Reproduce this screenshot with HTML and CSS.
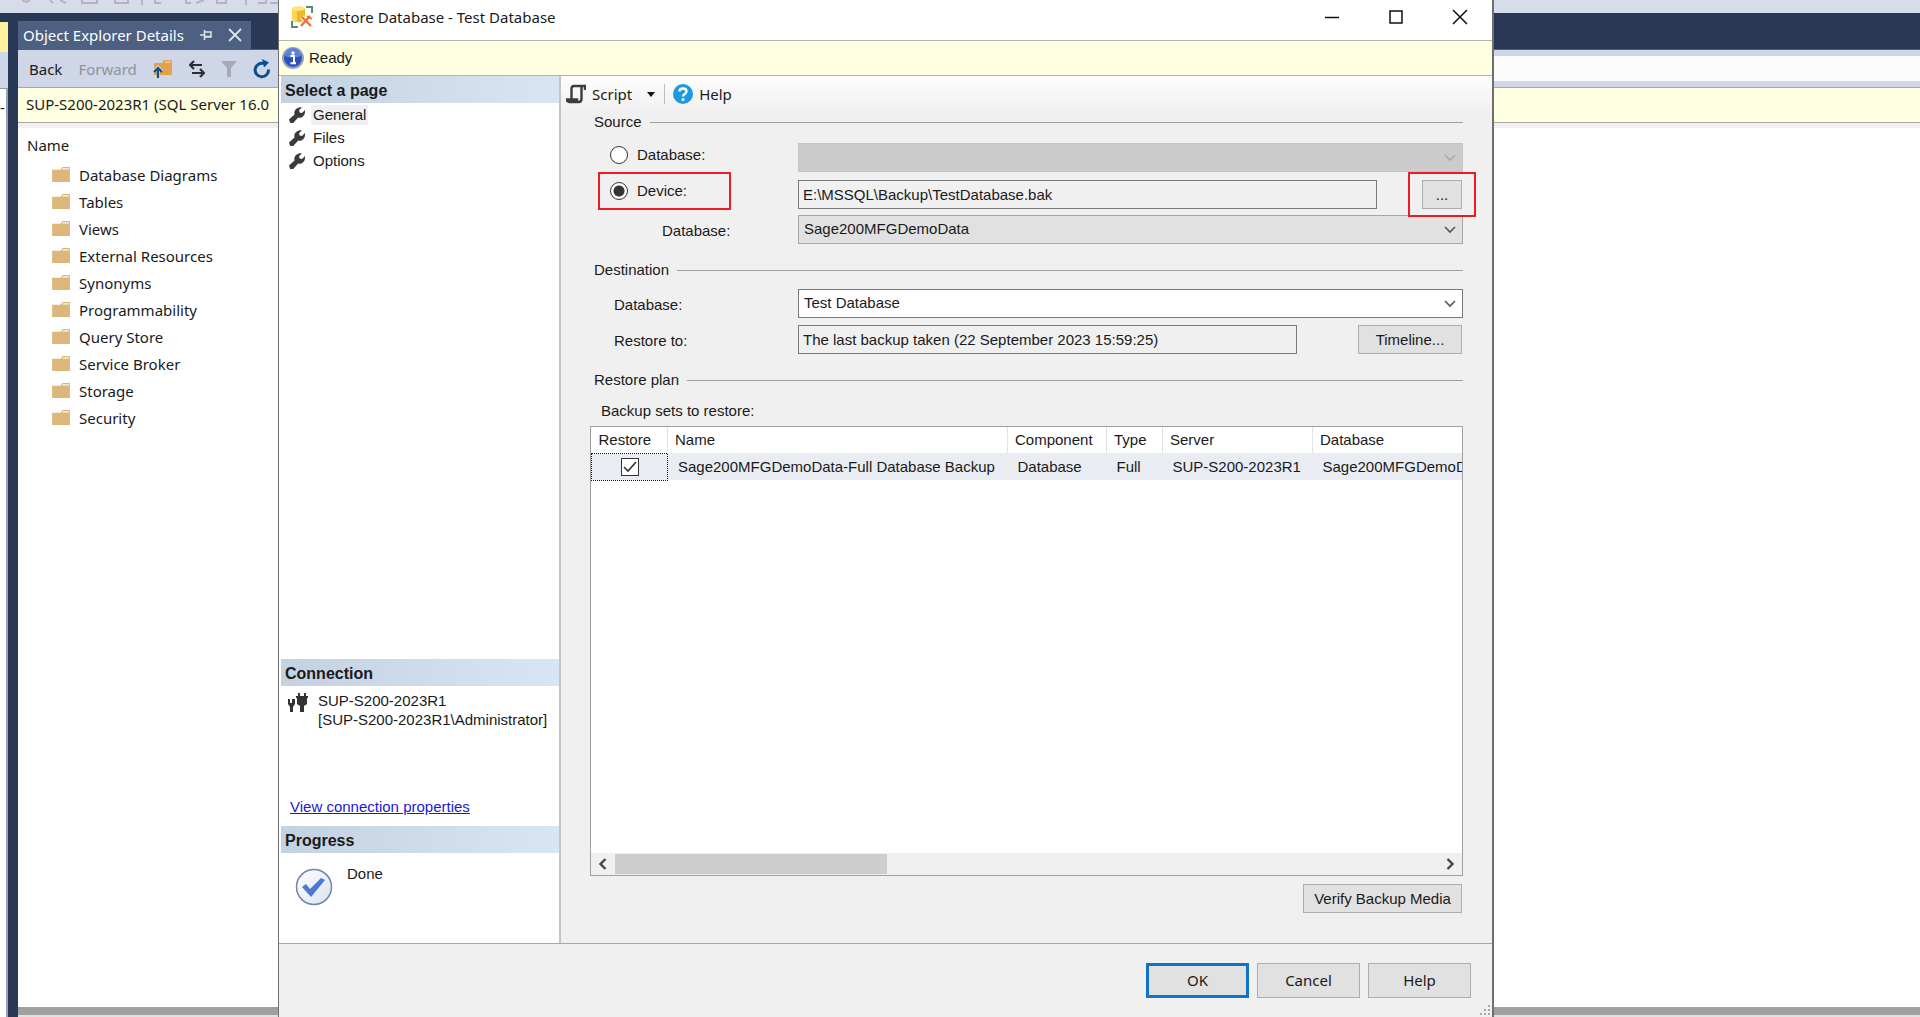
FILE: index.html
```html
<!DOCTYPE html>
<html lang="en">
<head>
<meta charset="utf-8">
<title>Restore Database - Test Database</title>
<link rel="stylesheet" href="styles.css">
</head>
<body>
<svg class="defs" aria-hidden="true">
  <symbol id="folder" viewBox="0 0 20 16"><path d="M0 3h9l2-3h8v16H0z" fill="#dcb67a"/><path d="M11 2h7" stroke="#fbf3e2" stroke-width="1.500"/></symbol>
  <symbol id="wrench" viewBox="0 0 16 16"><path d="M0 12.500 5.500 7.500C4.500 3.500 8 0 12.800 .4L10 3.300l.6 2.200 2.400.5L16 3C16.600 8.800 12.500 11.500 9.200 10.500L4.200 16H1.200z" fill="#3a3a3a"/></symbol>
  <symbol id="chevron" viewBox="0 0 12 8"><path d="M1 1l5 5 5-5" fill="none" stroke="currentColor" stroke-width="1.600"/></symbol>
</svg>

<div class="app">
  <div class="app-toolbar">
    <svg width="280" height="5" viewBox="0 0 280 5" fill="none" stroke="#b1b5bf" stroke-width="2"><path d="M22 0l4 2 4-2M50 0l3 3M60 0l6 3M82 0v3h15V0M115 0v3h13V0M155 0v3h6M186 0v3h5M196 3l8-3M217 0v3h9V0M258 3h8V0M270 3h10"/><path d="M142 0v5M246 0v5" stroke="#8f949f" stroke-width="1"/></svg>
  </div>
  <div class="workspace">
    <aside class="dock">
      <div class="dock-tab"></div>
      <div class="dock-tools"></div>
      <div class="dock-body">-.</div>
    </aside>
    <main class="details">
      <div class="tabs">
        <div class="tab">
          <span>Object Explorer Details</span>
          <svg width="12" height="12" viewBox="0 0 12 12" fill="none" stroke="#dfe5f0" stroke-width="1.500"><path d="M0 6h4M4.500 1v10M5 3h6v5H5M5 7.500h6"/></svg>
          <svg width="14" height="14" viewBox="0 0 14 14" stroke="#dfe5f0" stroke-width="1.800"><path d="M1 1l12 12M13 1L1 13"/></svg>
        </div>
      </div>
      <div class="details-toolbar">
        <button class="tool">Back</button>
        <button class="tool off" disabled>Forward</button>
        <button class="tool" aria-label="Up"><svg width="20" height="20" viewBox="0 0 20 20"><path d="M1 4h8l2-3h8v15H1z" fill="#e0a24c"/><path d="M12 3h6" stroke="#f6dfb8"/><path d="M0 11l5-5 5 5v2l-3-1v7H4v-7l-4 1z" fill="#cfd6e8"/><path d="M5 19v-8M1 13l4-4 4 4" fill="none" stroke="#0b4f8c" stroke-width="2.200"/></svg></button>
        <button class="tool" aria-label="Sync"><svg width="16" height="18" viewBox="0 0 16 18" fill="none" stroke="#2d2d33" stroke-width="2.200"><path d="M1 5h12M5 1L1 5l4 4M3 13h12M11 9l4 4-4 4"/></svg></button>
        <button class="tool" aria-label="Filter"><svg width="16" height="18" viewBox="0 0 16 18"><path d="M0 1h16l-6 7v9H6V8z" fill="#a6aab5"/></svg></button>
        <button class="tool" aria-label="Refresh"><svg width="18" height="20" viewBox="0 0 18 20"><path d="M15.500 10.500A6.700 6.700 0 1 1 11 4.700" fill="none" stroke="#0b4f8c" stroke-width="3"/><path d="M9 0l7 3.500-5 5z" fill="#0b4f8c"/></svg></button>
        <input class="search" type="text" aria-label="Search">
      </div>
      <div class="server-bar">SUP-S200-2023R1 (SQL Server 16.0</div>
      <div class="list">
        <div class="list-head">Name</div>
        <ul>
          <li><svg><use href="#folder"/></svg>Database Diagrams</li>
          <li><svg><use href="#folder"/></svg>Tables</li>
          <li><svg><use href="#folder"/></svg>Views</li>
          <li><svg><use href="#folder"/></svg>External Resources</li>
          <li><svg><use href="#folder"/></svg>Synonyms</li>
          <li><svg><use href="#folder"/></svg>Programmability</li>
          <li><svg><use href="#folder"/></svg>Query Store</li>
          <li><svg><use href="#folder"/></svg>Service Broker</li>
          <li><svg><use href="#folder"/></svg>Storage</li>
          <li><svg><use href="#folder"/></svg>Security</li>
        </ul>
      </div>
    </main>
  </div>
</div>

<div class="dialog" role="dialog" aria-labelledby="dialog-title">
  <header class="titlebar">
    <svg width="24" height="24" viewBox="0 0 24 24"><path d="M16 2h6v6M2 16v6h6" fill="none" stroke="#4f9070" stroke-width="2"/><path d="M2 3v12c2 3 11 3 13 0V3z" fill="#f3b81f"/><path d="M2 3v12c1 1.500 3 2 5 2V4z" fill="#fbd65b"/><ellipse cx="8.500" cy="3.500" rx="6.500" ry="2.500" fill="#fde28a"/><path d="M12 12l9 9M20 11l-9 10" stroke="#fff" stroke-width="4"/><path d="M12 12l9 9M20 11l-9 10" stroke="#e8743b" stroke-width="2.400"/><path d="M17 11l5 3" stroke="#e8743b" stroke-width="2"/></svg>
    <h1 id="dialog-title">Restore Database - Test Database</h1>
    <div class="window-buttons">
      <button aria-label="Minimize"><svg width="16" height="16" viewBox="0 0 16 16"><path d="M1 8.500h14" stroke="#111" stroke-width="1.500"/></svg></button>
      <button aria-label="Maximize"><svg width="16" height="16" viewBox="0 0 16 16"><path d="M2 2h12v12H2z" fill="none" stroke="#111" stroke-width="1.500"/></svg></button>
      <button aria-label="Close"><svg width="16" height="16" viewBox="0 0 16 16"><path d="M1 1l14 14M15 1L1 15" stroke="#111" stroke-width="1.500"/></svg></button>
    </div>
  </header>
  <div class="status">
    <svg width="22" height="22" viewBox="0 0 22 22"><circle cx="11" cy="11" r="10" fill="#2b50c0" stroke="#9aa3b8" stroke-width="2"/><path d="M3 9a8 8 0 0 1 16 0c-5 2-11 2-16 0z" fill="#5c7fdc"/><circle cx="11" cy="6" r="1.700" fill="#fff"/><path d="M8.500 9H12v7h1.500M8.500 16.300H14" fill="none" stroke="#fff" stroke-width="2"/></svg>
    <span>Ready</span>
  </div>
  <div class="dialog-body">
    <nav class="sidebar">
      <h2>Select a page</h2>
      <ul class="pages">
        <li><svg><use href="#wrench"/></svg><span class="current">General</span></li>
        <li><svg><use href="#wrench"/></svg><span>Files</span></li>
        <li><svg><use href="#wrench"/></svg><span>Options</span></li>
      </ul>
      <h2>Connection</h2>
      <div class="connection">
        <div class="server">
          <svg width="20" height="20" viewBox="0 0 20 20" fill="#333"><path d="M0 7h2v4h2V7h3v5l-2 3v5H2v-5l-2-3z"/><path d="M10 1h2v3h4V1h2v3h2v2h-1v6l-3 2v6h-4v-6l-3-2V6H8V4h2z"/></svg>
          <p>SUP-S200-2023R1<br>[SUP-S200-2023R1\Administrator]</p>
        </div>
        <a href="#connection">View connection properties</a>
      </div>
      <h2>Progress</h2>
      <div class="progress">
        <svg width="38" height="38" viewBox="0 0 38 38"><defs><linearGradient id="disc" x1="0" y1="0" x2="1" y2="1"><stop offset="0" stop-color="#fff"/><stop offset="1" stop-color="#dbe1ee"/></linearGradient></defs><circle cx="19" cy="19" r="17.500" fill="url(#disc)" stroke="#6e83ad" stroke-width="1.500"/><path d="M7 19l4-3 4 5L26 10l4 2-14 17z" fill="#4a78d6"/></svg>
        <span>Done</span>
      </div>
    </nav>
    <section class="page">
      <div class="page-toolbar">
        <button class="tool-button"><svg width="20" height="20" viewBox="0 0 20 20" fill="none" stroke="#3c3c3c" stroke-width="2.400"><path d="M19 6V2H8c-2 0-2.500 1-2.500 3v11M15.500 2v13c0 2-1 3-3 3H3c-1 0-2-1-2-2.500h10V18"/></svg>Script<svg class="caret" width="8" height="5" viewBox="0 0 8 5"><path d="M0 0h8L4 5z" fill="#111"/></svg></button>
        <button class="tool-button"><svg width="20" height="20" viewBox="0 0 20 20"><circle cx="10" cy="10" r="10" fill="#1e9bdd"/><path d="M6.500 7.500C6.500 3.500 13.500 3.500 13.500 7.500c0 2.500-3.500 2.500-3.500 5" fill="none" stroke="#fff" stroke-width="2.400"/><circle cx="10" cy="15.500" r="1.500" fill="#fff"/></svg>Help</button>
      </div>
      <form class="form">
        <h3>Source</h3>
        <div class="rows source">
          <label class="choice"><input type="radio" name="source"> Database:</label>
          <div class="combo"><select disabled aria-label="Source database"><option></option></select><svg><use href="#chevron"/></svg></div>
          <label class="choice marked"><input type="radio" name="source" checked> Device:</label>
          <div class="line wide"><input type="text" readonly aria-label="Device" value="E:\MSSQL\Backup\TestDatabase.bak"><span class="browse"><button type="button" class="button">...</button></span></div>
          <label class="sub" for="device-db">Database:</label>
          <div class="combo"><select id="device-db"><option>Sage200MFGDemoData</option></select><svg><use href="#chevron"/></svg></div>
        </div>
        <h3>Destination</h3>
        <div class="rows destination">
          <label for="target-db">Database:</label>
          <div class="combo white"><select id="target-db"><option>Test Database</option></select><svg><use href="#chevron"/></svg></div>
          <label for="restore-to">Restore to:</label>
          <div class="line"><input id="restore-to" type="text" readonly value="The last backup taken (22 September 2023 15:59:25)"><button type="button" class="button timeline">Timeline...</button></div>
        </div>
        <h3>Restore plan</h3>
        <p class="caption" id="sets">Backup sets to restore:</p>
        <div class="grid">
          <div class="grid-view">
            <table aria-labelledby="sets">
              <colgroup><col class="c-restore"><col class="c-name"><col class="c-component"><col class="c-type"><col class="c-server"><col class="c-database"></colgroup>
              <thead><tr><th>Restore</th><th>Name</th><th>Component</th><th>Type</th><th>Server</th><th>Database</th></tr></thead>
              <tbody><tr><td class="pick"><span class="check"><input type="checkbox" checked aria-label="Restore this backup set"><svg width="14" height="12" viewBox="0 0 14 12"><path d="M1 6l4 4 8-9" fill="none" stroke="#333" stroke-width="1.600"/></svg></span></td><td>Sage200MFGDemoData-Full Database Backup</td><td>Database</td><td>Full</td><td>SUP-S200-2023R1</td><td>Sage200MFGDemoData</td></tr></tbody>
            </table>
          </div>
          <div class="scrollbar">
            <svg width="9" height="12" viewBox="0 0 9 12"><path d="M7.500 1l-5 5 5 5" fill="none" stroke="#444" stroke-width="2.400"/></svg>
            <div class="track"><div class="thumb"></div></div>
            <svg width="9" height="12" viewBox="0 0 9 12"><path d="M1.500 1l5 5-5 5" fill="none" stroke="#444" stroke-width="2.400"/></svg>
          </div>
        </div>
        <button type="button" class="button verify">Verify Backup Media</button>
      </form>
    </section>
  </div>
  <footer class="dialog-footer">
    <button class="button default">OK</button>
    <button class="button">Cancel</button>
    <button class="button">Help</button>
    <svg class="grip" width="12" height="12" viewBox="0 0 12 12" fill="#a9a9a9"><path d="M9 0h2v2H9zM5 4h2v2H5zM9 4h2v2H9zM1 8h2v2H1zM5 8h2v2H5zM9 8h2v2H9z"/></svg>
  </footer>
</div>
</body>
</html>
```

FILE: styles.css
```css
*, *::after { box-sizing: border-box; margin: 0; padding: 0; }

:root {
  --ui: "Noto Sans", "Open Sans", sans-serif;
  --form: "Liberation Sans", Arial, sans-serif;
  --navy: #293955;
  --bar: #cfd6e8;
  --face: #f0f0f0;
  --info: #ffffe1;
}

html, body { height: 100%; }
body { position: relative; overflow: hidden; font: 15px/20px var(--ui); color: #1a1a1a; }
button, input, select { font: inherit; color: inherit; border: 0; background: none; }
ul { list-style: none; }
svg { display: block; flex: none; }
.defs { position: absolute; width: 0; height: 0; }

/* Main window */
.app { display: flex; flex-direction: column; height: 100%; background: var(--navy); }
.app-toolbar { height: 13px; background: #d6dcea; }
.workspace { display: flex; flex: 1; gap: 10px; min-height: 0; }

.dock { display: flex; flex-direction: column; width: 8px; padding-top: 9px; }
.dock-tab { height: 30px; background: #fff29d; }
.dock-tools { height: 36px; background: var(--bar); }
.dock-body { flex: 1; padding-top: 8px; overflow: hidden; background: #fff; border-right: 2px solid #9aa3b3; border-top: 1px solid #8e97a8; }

.details { display: flex; flex: 1; flex-direction: column; min-width: 0; }
.tabs { display: flex; height: 37px; padding-top: 8px; border-bottom: 1px solid #4d6082; }
.tab { display: flex; align-items: center; gap: 16px; padding: 0 9px 0 5px; background: #4d6082; color: #fff; }
.details-toolbar { display: flex; align-items: center; gap: 16px; height: 37px; padding-left: 11px; background: var(--bar); }
.tool.off { color: #8f939c; }
.search { flex: 1; min-width: 0; height: 25px; margin-left: 12px; background: #fcfcfd; }
.server-bar { height: 36px; padding-left: 8px; line-height: 33px; overflow: hidden; background: var(--info); border: 1px solid #a8a8a0; border-width: 1px 0; }
.list { flex: 1; background: #fff; border-top: 5px solid var(--face); border-bottom: 8px solid #a0a0a0; margin-bottom: 2px; box-shadow: 0 2px #e1e1e1; }
.list-head { padding: 7px 9px 6px; }
.list li { display: flex; align-items: center; gap: 8px; height: 27px; padding-left: 34px; }
.list li svg { width: 19px; height: 15px; }

/* Dialog window */
.dialog { position: absolute; top: 0; bottom: 0; left: 278px; right: 426px; display: flex; flex-direction: column; background: var(--face); border: 1px solid #6f6f6f; border-top: 0; border-bottom: 0; border-right-width: 2px; font: 15px/20px var(--form); }
.titlebar { display: flex; align-items: center; gap: 6px; height: 40px; padding: 0 24px 6px 11px; background: #fff; }
.titlebar h1 { flex: 1; font: 15px/20px var(--ui); }
.window-buttons { display: flex; gap: 48px; }
.window-buttons button { width: 16px; height: 16px; }
.status { display: flex; align-items: center; gap: 5px; height: 36px; padding-left: 3px; background: var(--info); border: 1px solid #b5b5a8; border-width: 1px 0; }
.dialog-body { display: flex; flex: 1; min-height: 0; border-bottom: 1px solid #a8a8a8; }

.sidebar { display: flex; flex-direction: column; width: 282px; padding-left: 2px; background: #fff; border-right: 2px solid #c4c4c4; }
.sidebar h2 { height: 27px; padding-left: 4px; font-size: 16px; line-height: 29px; background: linear-gradient(90deg, #c4d1e0, #d7e5f4); }
.pages { flex: 1; }
.pages li { display: flex; align-items: center; gap: 6px; height: 23px; padding-left: 8px; }
.pages svg { width: 16px; height: 16px; }
.pages span { padding: 0 2px; }
.pages .current { background: #f0f0f3; }
.connection { display: flex; flex-direction: column; align-items: flex-start; justify-content: space-between; height: 140px; padding: 5px 7px 9px; }
.connection a { padding-left: 2px; color: #1a1ad6; }
.server { display: flex; gap: 10px; }
.server svg { margin-top: 1px; }
.server p { line-height: 19px; }
.progress { display: flex; gap: 14px; height: 90px; padding: 11px 14px; }
.progress svg { margin-top: 4px; }

.page { display: flex; flex: 1; flex-direction: column; min-width: 0; }
.page-toolbar { display: flex; align-items: center; height: 36px; padding-left: 5px; font-family: var(--ui); background: linear-gradient(#fdfdfd, var(--face)); }
.tool-button { display: flex; align-items: center; gap: 6px; }
.tool-button + .tool-button { margin-left: 9px; padding-left: 8px; border-left: 1px solid #bdbdbd; }
.caret { margin-left: 9px; }

.form { display: flex; flex: 1; flex-direction: column; min-height: 0; padding: 0 29px 30px; }
.form h3 { display: flex; align-items: center; gap: 8px; padding-left: 4px; font-size: 15px; font-weight: 400; }
.form h3::after { content: ""; flex: 1; height: 1px; background: #a0a0a0; }
.rows { display: grid; grid-template-columns: 208px 1fr; align-items: center; }
.source { row-gap: 6px; margin: 11px 0 16px; }
.destination { row-gap: 7px; margin: 9px 0 16px; }
.destination label { padding: 2px 0 0 24px; }
.choice { display: flex; align-items: center; gap: 9px; padding: 0 0 5px 20px; }
.choice input { appearance: none; width: 18px; height: 18px; border: 1px solid #333; border-radius: 50%; background: #fff; }
.choice input:checked { background: radial-gradient(circle, #333 5px, #fff 6px); }
.sub { padding: 2px 0 0 72px; }
.combo, .choice, .browse, .check { position: relative; }
.combo select { display: block; appearance: none; width: 100%; height: 29px; padding: 0 5px 2px; background: #e1e1e1; border: 1px solid #a6a6a6; }
.combo select:disabled { background: #ccc; border-color: #c4c4c4; opacity: 1; }
.combo.white select { background: #fff; border-color: #7a7a7a; }
.combo svg { position: absolute; right: 7px; top: 11px; width: 12px; height: 8px; color: #555; pointer-events: none; }
.combo select:disabled + svg { color: #aaa; }
.marked::after, .browse::after { content: ""; position: absolute; border: 2px solid #ed1c24; pointer-events: none; }
.browse { z-index: 1; }
.marked::after { left: 8px; top: -9px; width: 133px; height: 38px; }
.browse::after { inset: -8px -14px; }
.line { display: flex; justify-content: space-between; gap: 61px; padding-right: 1px; }
.line.wide { gap: 45px; padding-top: 2px; }
.line input { flex: 1; min-width: 0; height: 29px; padding: 0 4px; border: 1px solid #7a7a7a; }
.button { height: 29px; background: #e1e1e1; border: 1px solid #adadad; }
.browse .button { width: 40px; }
.timeline { width: 104px; }
.caption { padding: 11px 11px 5px; }

.grid { display: flex; flex: 1; flex-direction: column; min-height: 0; background: #fff; border: 1px solid #a0a0a0; }
.grid-view { flex: 1; overflow: hidden; }
table { width: 100%; table-layout: fixed; border-collapse: collapse; }
.c-restore { width: 76px; }
.c-name { width: 340px; }
.c-component { width: 99px; }
.c-type { width: 56px; }
.c-server { width: 150px; }
th, td { height: 27px; overflow: hidden; text-align: left; font-weight: 400; white-space: nowrap; }
th { height: 26px; padding-left: 7px; }
th + th { border-left: 1px solid #e3e3e3; }
td { padding-left: 10px; background: #e9edf3; }
.pick { padding: 0; border: 1px dotted #111; }
.check { display: block; width: 18px; margin: 0 auto; }
.check input { display: block; appearance: none; width: 18px; height: 18px; background: #fff; border: 1px solid #333; }
.check svg { position: absolute; left: 2px; top: 3px; pointer-events: none; }
.scrollbar { display: flex; align-items: center; height: 22px; padding: 0 7px; gap: 8px; background: var(--face); }
.track { flex: 1; height: 20px; }
.thumb { width: 33%; height: 100%; background: #cdcdcd; }
.verify { align-self: flex-end; width: 159px; margin: 8px 1px 0 0; }

.dialog-footer { display: flex; position: relative; gap: 8px; justify-content: flex-end; height: 73px; padding: 19px 21px; font-family: var(--ui); }
.dialog-footer .button { width: 103px; height: 35px; padding-bottom: 1px; }
.dialog-footer .default { border: 3px solid #0f74c8; }
.grip { position: absolute; right: 1px; bottom: 0; }
```
